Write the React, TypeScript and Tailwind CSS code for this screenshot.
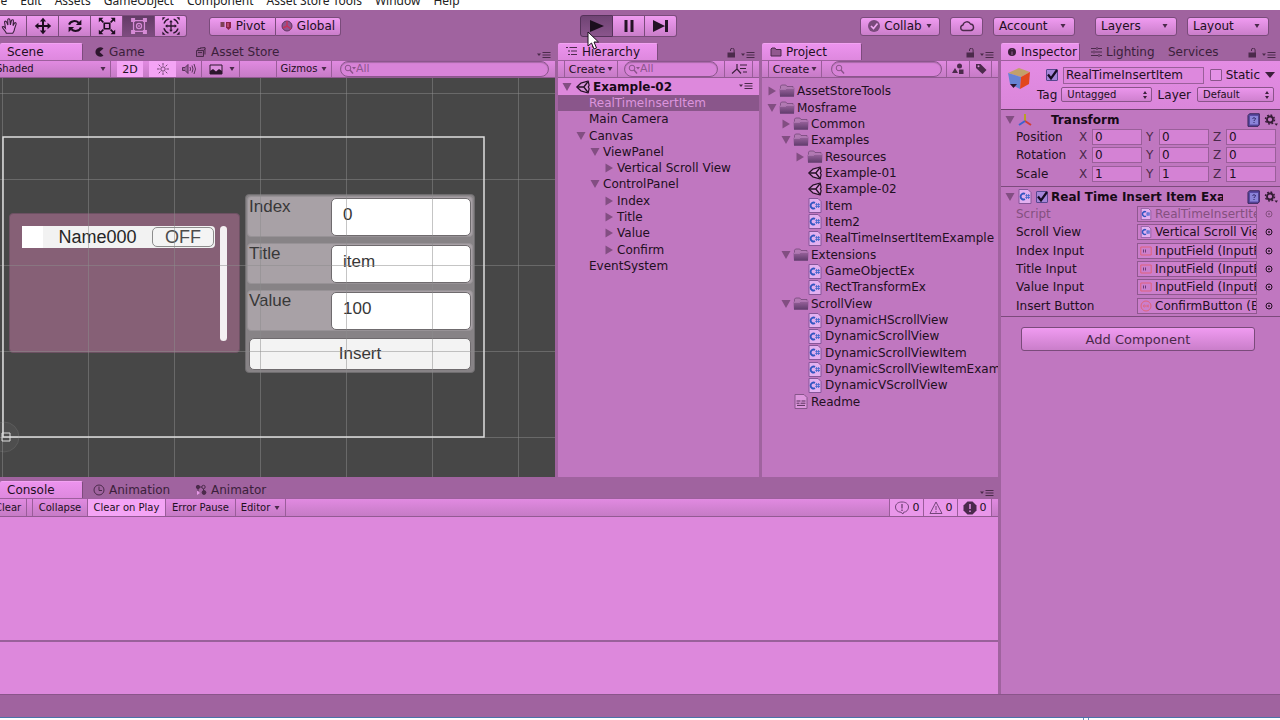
import React from 'react';
import clsx from 'clsx';

type IconProps = { className?: string };

const menus = ['File', 'Edit', 'Assets', 'GameObject', 'Component', 'Asset Store Tools', 'Window', 'Help'];

const hierarchy = [
    { name: 'RealTimeInsertItem', depth: 0, selected: true },
    { name: 'Main Camera', depth: 0 },
    { name: 'Canvas', depth: 0, open: true },
    { name: 'ViewPanel', depth: 1, open: true },
    { name: 'Vertical Scroll View', depth: 2, open: false },
    { name: 'ControlPanel', depth: 1, open: true },
    { name: 'Index', depth: 2, open: false },
    { name: 'Title', depth: 2, open: false },
    { name: 'Value', depth: 2, open: false },
    { name: 'Confirm', depth: 2, open: false },
    { name: 'EventSystem', depth: 0 },
];

const assets = [
    { name: 'AssetStoreTools', depth: 0, kind: 'folder', open: false },
    { name: 'Mosframe', depth: 0, kind: 'folder', open: true },
    { name: 'Common', depth: 1, kind: 'folder', open: false },
    { name: 'Examples', depth: 1, kind: 'folder', open: true },
    { name: 'Resources', depth: 2, kind: 'folder', open: false },
    { name: 'Example-01', depth: 2, kind: 'scene' },
    { name: 'Example-02', depth: 2, kind: 'scene' },
    { name: 'Item', depth: 2, kind: 'script' },
    { name: 'Item2', depth: 2, kind: 'script' },
    { name: 'RealTimeInsertItemExample', depth: 2, kind: 'script' },
    { name: 'Extensions', depth: 1, kind: 'folder', open: true },
    { name: 'GameObjectEx', depth: 2, kind: 'script' },
    { name: 'RectTransformEx', depth: 2, kind: 'script' },
    { name: 'ScrollView', depth: 1, kind: 'folder', open: true },
    { name: 'DynamicHScrollView', depth: 2, kind: 'script' },
    { name: 'DynamicScrollView', depth: 2, kind: 'script' },
    { name: 'DynamicScrollViewItem', depth: 2, kind: 'script' },
    { name: 'DynamicScrollViewItemExample', depth: 2, kind: 'script' },
    { name: 'DynamicVScrollView', depth: 2, kind: 'script' },
    { name: 'Readme', depth: 1, kind: 'text' },
];

const indents = ['pl-[5px]', 'pl-[19px]', 'pl-[33px]'];

const transform = [
    { name: 'Position', value: '0' },
    { name: 'Rotation', value: '0' },
    { name: 'Scale', value: '1' },
];

const fields = [
    { name: 'Script', value: 'RealTimeInsertItemExample', kind: 'script', disabled: true },
    { name: 'Scroll View', value: 'Vertical Scroll View', kind: 'script' },
    { name: 'Index Input', value: 'InputField (InputField)', kind: 'input' },
    { name: 'Title Input', value: 'InputField (InputField)', kind: 'input' },
    { name: 'Value Input', value: 'InputField (InputField)', kind: 'input' },
    { name: 'Insert Button', value: 'ConfirmButton (Button)', kind: 'button' },
];

const raised = 'border border-[#7a4b7b] bg-linear-to-b from-[#f09bf1] to-[#ca7eca]';
const strip = 'flex h-[18px] items-stretch border-y border-t-[#9d5f9d] border-b-[#935a93] bg-linear-to-b from-[#e18ae1] to-[#c67bc6]';

/* ---------- icons ---------- */

function Arrow({ open, className }: { open?: boolean; className?: string }) {
    return (
        <svg viewBox="0 0 10 10" className={clsx('size-[10px] shrink-0 fill-[#824e82]', className)}>
            <path d={open ? 'M0.5 1h9L5 9z' : 'M1.5 0.5v9L9 5z'} />
        </svg>
    );
}

function Caret({ className }: IconProps) {
    return (
        <svg viewBox="0 0 6 4" className={clsx('h-[4px] w-[6px] shrink-0 fill-[#4a294a]', className)}>
            <path d="M0.5 0h5L3 4z" />
        </svg>
    );
}

function Folder({ className }: IconProps) {
    return (
        <svg viewBox="0 0 16 14" className={clsx('h-[14px] w-4 shrink-0', className)}>
            <defs>
                <linearGradient id="folder" x1="0" y1="0" x2="0" y2="1">
                    <stop offset="0" stopColor="#9c659f" />
                    <stop offset="1" stopColor="#5f3b6b" />
                </linearGradient>
            </defs>
            <path d="M1.5 6V2.2L2.5 1h4.300L8 2.500h6V6z" fill="#b27ab3" stroke="#75497a" strokeWidth=".8" />
            <path d="M0.5 4.800h6l1-1h8l-.5 9H1z" fill="url(#folder)" />
            <path d="M1 5.200h5.800l1-1h7" fill="none" stroke="#c58bc7" strokeWidth=".7" />
        </svg>
    );
}

function UnityLogo({ className }: IconProps) {
    return (
        <svg viewBox="0 0 14 14" className={clsx('size-[14px] shrink-0', className)} fill="none" stroke="#241024" strokeLinejoin="round">
            <path d="M0.800 7 4.800 3.200 12.200 1l.9 4.400-.8 1.600.8 1.600-.9 4.400L4.800 10.800z" strokeWidth="1.200" fill="#d793d8" />
            <path d="M1.500 7h6.300M7.800 7l3.900-5M7.800 7l3.900 5" strokeWidth="1.300" />
        </svg>
    );
}

function ScriptIcon({ className }: IconProps) {
    return (
        <svg viewBox="0 0 14 15" className={clsx('shrink-0', className ?? 'h-[15px] w-[14px]')}>
            <path d="M1 .5h9l3 3v11H1z" fill="#e3b0f0" stroke="#86569a" />
            <path d="M7 4.9A3 3 0 1 0 7 10.2" fill="none" stroke="#3255c0" strokeWidth="1.9" />
            <path d="M8.6 5v5M10.6 5v5M7.3 6.6H12M7.3 8.5H12" stroke="#4769cf" strokeWidth=".9" />
        </svg>
    );
}

function TextIcon() {
    return (
        <svg viewBox="0 0 14 15" className="h-[15px] w-[14px] shrink-0">
            <path d="M1 .5h9l3 3v11H1z" fill="#dd96dd" stroke="#86568a" />
            <path d="M2.5 7h4M7.5 7h4M2.5 9.2h3M6.5 9.2h5M3 11.4h8" stroke="#542f58" />
        </svg>
    );
}

function FieldIcon({ kind }: { kind: string }) {
    if (kind === 'script') return <ScriptIcon className="h-3 w-3" />;
    if (kind === 'input') {
        return (
            <svg viewBox="0 0 12 10" className="h-[10px] w-3 shrink-0" fill="none" stroke="#e0637c">
                <path d="M.8 1h10.4v8H.8z" />
                <path d="M3.5 3.5v3M5.5 3.5v3" stroke="#6b3b78" />
            </svg>
        );
    }
    return (
        <svg viewBox="0 0 12 12" className="size-3 shrink-0" fill="none" stroke="#e0637c">
            <circle cx="6" cy="6" r="5" />
            <circle cx="4.4" cy="6" r="1" strokeWidth=".9" />
            <path d="M7 4.8v2.4M9 4.8 7.4 6 9 7.2" strokeWidth=".9" />
        </svg>
    );
}

function AssetIcon({ kind }: { kind: string }) {
    if (kind === 'folder') return <Folder />;
    if (kind === 'scene') return <UnityLogo />;
    if (kind === 'script') return <ScriptIcon />;
    return <TextIcon />;
}

function LockIcon() {
    return (
        <svg viewBox="0 0 9 10" className="h-[10px] w-[9px]">
            <path d="M.5 4.5h7.5v5H.5z" fill="#4b2a4b" />
            <path d="M3.5 3V2a1.8 1.8 0 0 1 3.6 0v3" fill="none" stroke="#4b2a4b" />
        </svg>
    );
}

function PaneMenu({ lock }: { lock?: boolean }) {
    return (
        <div className="ml-auto flex items-end gap-[5px] pr-1 pb-px">
            {lock && (
                <button aria-label="Lock pane" className="pb-px">
                    <LockIcon />
                </button>
            )}
            <button aria-label="Pane menu">
                <svg viewBox="0 0 14 8" className="h-2 w-[14px]">
                    <path d="M0 2.5h4L2 5z" fill="#4b2a4b" />
                    <path d="M5.5 1.5h8M5.5 4h8M5.5 6.5h8" stroke="#4b2a4b" />
                </svg>
            </button>
        </div>
    );
}

function BookIcon() {
    return (
        <svg viewBox="0 0 13 14" className="h-[14px] w-[13px]">
            <path d="M1 2.5 2.5.8h9.8v11L11 13.3H1z" fill="#5a4aa5" stroke="#332458" />
            <path d="M3 3h8v8.5H3z" fill="#8a83d8" />
            <path d="M5.5 5.5q1.5-1.6 3 0c.4 1.3-1.5 1-1.5 2.5M7 9v1" fill="none" stroke="#2c2264" />
        </svg>
    );
}

function GearIcon() {
    return (
        <svg viewBox="0 0 14 14" className="size-[14px]">
            <circle cx="6" cy="6.5" r="3" fill="none" stroke="#341c34" strokeWidth="1.800" />
            <circle cx="6" cy="6.5" r="4.500" fill="none" stroke="#341c34" strokeWidth="1.5" strokeDasharray="1.767 1.767" />
            <path d="M10.5 10.5H14l-1.7 2.3z" fill="#341c34" />
        </svg>
    );
}

const toolIcons: Record<string, React.ReactNode> = {
    Hand: (
        <path
            d="M7 19c-1-3-4-4.500-4.500-7 1-1.200 2.500.3 3.500 1.500L5 6.500c1-1.500 2-.8 2.400.3L8.700 10 8.500 4c.8-1.500 2-1 2.400.3l.5 5.500 1.200-5c1-1.300 2.200-.6 2.200.6l-.5 5.200 1.700-3c1.200-.8 2 .1 1.700 1.400L16 14c0 2-1 3.500-2 5z"
            fill="#e695e8"
            stroke="#3a203c"
            strokeWidth="1.2"
        />
    ),
    Move: (
        <>
            <path d="M11 4v14M4 11h14" stroke="#1d0d1f" strokeWidth="2.2" />
            <path d="M11 2l3.500 4h-7zM11 20l3.500-4h-7zM2 11l4-3.500v7zM20 11l-4-3.500v7z" fill="#1d0d1f" />
        </>
    ),
    Rotate: (
        <>
            <path d="M4.500 9.500C6 5 12 4.500 15 7.500M17.500 12.500C16 17 10 17.500 7 14.500" fill="none" stroke="#1d0d1f" strokeWidth="2.200" />
            <path d="M18 4v6h-6zM4 18v-6h6z" fill="#1d0d1f" />
        </>
    ),
    Scale: (
        <>
            <path d="M8 8h6v6H8z" fill="none" stroke="#1d0d1f" strokeWidth="1.800" />
            <path d="M4 4l3 3M18 4l-3 3M4 18l3-3M18 18l-3-3" stroke="#1d0d1f" strokeWidth="1.800" />
            <path d="M2 2h5L2 7zM20 2h-5l5 5zM2 20h5l-5-5zM20 20h-5l5-5z" fill="#1d0d1f" />
        </>
    ),
    Rect: (
        <g fill="none" stroke="#d68bd6" strokeWidth="1.400">
            <path d="M5 5h12v12H5z" />
            <path d="M3 3h3v3H3zM16 3h3v3h-3zM3 16h3v3H3zM16 16h3v3h-3z" fill="#d68bd6" />
            <circle cx="11" cy="11" r="2.800" />
            <path d="M11 10v2" />
        </g>
    ),
    Transform: (
        <>
            <path d="M11 6v10M6 11h10" stroke="#2b152d" strokeWidth="1.400" />
            <path d="M11 4.500l2 2.500H9zM11 17.500l2-2.500H9zM4.500 11 7 9v4zM17.500 11 15 9v4z" fill="#2b152d" />
            <circle cx="11" cy="11" r="8.200" fill="none" stroke="#2b152d" strokeWidth="1.500" strokeDasharray="7.500 5.380" strokeDashoffset="-2.700" />
            <path d="M1.500 1.500H5L1.500 5zM20.500 1.500H17L20.500 5zM1.500 20.500H5L1.500 17zM20.500 20.500H17l3.500-3.500z" fill="#2b152d" />
        </>
    ),
};

/* ---------- shared pieces ---------- */

function Tab({ icon, active, className, children }: { icon?: React.ReactNode; active?: boolean; className?: string; children: React.ReactNode }) {
    return (
        <button
            className={clsx(
                'flex shrink-0 items-center gap-1 rounded-t-[2px] text-[12px] leading-none',
                active ? 'border-t border-r border-t-[#f2a2f2] border-r-[#7d4b7d] bg-linear-to-b from-[#ec93ee] to-[#de88de] text-[#220f22]' : 'text-[#3b1f3b]',
                className,
            )}
        >
            {icon && (
                <svg viewBox="0 0 12 12" className="size-3 shrink-0" fill="none" stroke="#4b2a4b">
                    {icon}
                </svg>
            )}
            {children}
        </button>
    );
}

function Search({ placeholder, className, label }: { placeholder?: string; className?: string; label: string }) {
    return (
        <label className={clsx('flex min-w-0 items-center rounded-full border border-[#8b568c] bg-[#d883d8] pl-[3px] shadow-[inset_0_1px_1px_#a868a8]', className)}>
            <svg viewBox="0 0 12 10" className="h-[10px] w-3 shrink-0" fill="none" stroke="#8a528a">
                <circle cx="4" cy="4" r="2.800" />
                <path d="M6 6l3 3.500" strokeWidth="1.400" />
                {placeholder && <path d="M8 3h4l-2 2.500z" fill="#8a528a" stroke="none" />}
            </svg>
            <input aria-label={label} placeholder={placeholder} className="h-[14px] w-full min-w-0 bg-transparent pb-px text-[11px] leading-none text-[#3b1f3b] outline-none placeholder:text-[#8f568f]" />
        </label>
    );
}

function Check({ id, checked, label }: { id: string; checked?: boolean; label: string }) {
    return (
        <span className="relative flex size-3 shrink-0">
            <input
                id={id}
                type="checkbox"
                aria-label={label}
                defaultChecked={checked}
                className="peer size-3 appearance-none rounded-[1px] border border-[#8b558c] bg-[#e492e6] checked:border-[#57478f] checked:bg-[#a585d8]"
            />
            <svg viewBox="0 0 12 12" className="pointer-events-none absolute inset-0 hidden size-3 overflow-visible peer-checked:block">
                <path d="M2 5.500 5 9.500 11 1" fill="none" stroke="#160b22" strokeWidth="2.200" />
            </svg>
        </span>
    );
}

function Popup({ id, value, className }: { id: string; value: string; className: string }) {
    return (
        <span className={clsx('relative flex min-w-0', className)}>
            <select id={id} className="h-[15px] w-full appearance-none rounded-[2px] border border-[#8a548a] bg-linear-to-b from-[#eb96ec] to-[#cf80cf] pl-[5px] text-[10px] leading-none text-[#220f22]">
                <option>{value}</option>
            </select>
            <svg viewBox="0 0 4 8" className="pointer-events-none absolute top-1 right-[5px] h-2 w-1 fill-[#3b1f3b]">
                <path d="M0 3l2-3 2 3zM0 5h4L2 8z" />
            </svg>
        </span>
    );
}

/* ---------- panes ---------- */

function Toolbar() {
    return (
        <div className="flex h-8 items-center pr-[11px] text-[12px] leading-none">
            <div className="flex">
                {Object.keys(toolIcons).map((name, i) => (
                    <button
                        key={name}
                        aria-label={name}
                        className={clsx(
                            'flex h-[22px] items-center justify-center border-y border-r border-[#7a4b7b]',
                            i === 0 ? 'w-[27px] pr-[6px]' : 'w-8',
                            i === 5 && 'rounded-r-[3px]',
                            name === 'Rect' ? 'bg-linear-to-b from-[#633b66] to-[#7e4c80]' : 'bg-linear-to-b from-[#f09bf1] to-[#ca7eca]',
                        )}
                    >
                        <svg viewBox="0 0 22 22" className="size-5 shrink-0">
                            {toolIcons[name]}
                        </svg>
                    </button>
                ))}
            </div>
            <div className="ml-[22px] flex h-[19px]">
                <button className={clsx(raised, 'flex w-[67px] items-center justify-center gap-1 rounded-l-[3px]')}>
                    <svg viewBox="0 0 12 10" className="h-[10px] w-3">
                        <path d="M.5 1h4v5h-4z" fill="#7d4156" />
                        <path d="M6 1h5v5.500L8.500 9 6 6.500z" fill="#8b2448" />
                        <path d="M8 2v4" stroke="#e56c9a" />
                    </svg>
                    Pivot
                </button>
                <button className={clsx(raised, 'flex w-[65px] items-center justify-center gap-1 rounded-r-[3px] border-l-0')}>
                    <svg viewBox="0 0 12 12" className="size-3">
                        <circle cx="6" cy="6" r="5" fill="#8f5590" stroke="#5f3560" />
                        <path d="M6 1v5l4 3M6 6 2 8" stroke="#c8315a" fill="none" strokeWidth="1.400" />
                    </svg>
                    Global
                </button>
            </div>
            <div className="grow-17" />
            <div className="relative flex h-[22px]">
                <button aria-label="Play" className="flex w-[33px] items-center justify-center rounded-l-[3px] border border-[#55325a] bg-linear-to-b from-[#704474] to-[#8a558c]">
                    <svg viewBox="0 0 16 14" className="h-[14px] w-4">
                        <path d="M1 1l14 6-14 6z" fill="#1b0e1d" />
                    </svg>
                </button>
                <button aria-label="Pause" className={clsx(raised, 'flex w-8 items-center justify-center border-l-0')}>
                    <svg viewBox="0 0 12 14" className="h-[14px] w-3">
                        <path d="M1.500 1h3v12h-3zM7.500 1h3v12h-3z" fill="#241326" />
                    </svg>
                </button>
                <button aria-label="Step" className={clsx(raised, 'flex w-8 items-center justify-center rounded-r-[3px] border-l-0')}>
                    <svg viewBox="0 0 16 14" className="h-[14px] w-4">
                        <path d="M0 1l12 6-12 6zM12 1h3v12h-3z" fill="#241326" />
                    </svg>
                </button>
                <svg viewBox="0 0 14 20" className="pointer-events-none absolute top-4 left-[7px] z-10 h-5 w-[14px]">
                    <path d="M1 1v14l3.500-3 2.500 6 2.500-1-2.500-6h4.500z" fill="#fff" stroke="#1a0e1c" />
                </svg>
            </div>
            <div className="grow-13" />
            <div className="flex h-[19px] gap-[10px]">
                <button className={clsx(raised, 'flex w-[80px] items-center justify-center gap-1 rounded-[3px]')}>
                    <svg viewBox="0 0 12 12" className="size-3">
                        <circle cx="6" cy="6" r="6" fill="#7a4a7c" />
                        <path d="M3 6l2.500 2.500L9.500 3.500" fill="none" stroke="#f0a8f1" strokeWidth="1.700" />
                    </svg>
                    Collab
                    <Caret />
                </button>
                <button aria-label="Cloud" className={clsx(raised, 'flex w-[33px] items-center justify-center rounded-[3px]')}>
                    <svg viewBox="0 0 16 12" className="h-3 w-4" fill="none" stroke="#4b2a4b" strokeWidth="1.400">
                        <path d="M4 10.500a2.800 2.800 0 0 1 0-5.500 4 4 0 0 1 7.500-1 3.300 3.300 0 0 1 .5 6.500z" />
                    </svg>
                </button>
                {['Account', 'Layers', 'Layout'].map((name) => (
                    <button key={name} className={clsx(raised, 'flex w-[82px] items-center justify-between rounded-[3px] pr-2 pl-[5px]', name === 'Layers' && 'ml-[10px]')}>
                        {name}
                        <Caret />
                    </button>
                ))}
            </div>
        </div>
    );
}

function SceneView() {
    return (
        <div className="relative min-h-[399px] flex-1 overflow-hidden bg-[#474747] font-['Liberation_Sans',Arial,sans-serif] text-[17px] leading-none text-[#383838]">
            <div className="absolute top-[135px] left-[9px] h-[140px] w-[231px] rounded-[4px] border border-[#6d5163] bg-[#866076]">
                <div className="absolute top-3 left-3 flex h-[22px] w-[193px] items-center rounded-r-[4px] bg-[#f2f2f2]">
                    <div className="h-full w-[21px] bg-white" />
                    <span className="flex-1 text-center text-[18px] text-[#262626]">Name000</span>
                    <button className="mr-px h-5 w-[62px] rounded-[5px] border border-[#8c8c8c] bg-[#f4f4f4] text-[18px] text-[#4c4c4c]">OFF</button>
                </div>
                <div className="absolute top-3 right-3 h-[115px] w-[7px] rounded-full bg-[#f4f0f2]" />
            </div>
            <div className="absolute top-[116px] left-[245px] h-[179px] w-[230px] rounded-[4px] border border-[#6f6d6f] bg-[#878386]">
                {[
                    ['Index', '0', 'top-[1px]'],
                    ['Title', 'item', 'top-[48px]'],
                    ['Value', '100', 'top-[95px]'],
                ].map(([name, value, top]) => (
                    <div key={name} className={clsx('absolute left-px h-[41px] w-[226px] rounded-[4px] border border-[#979296] bg-[#a8a1a6]', top)}>
                        <label htmlFor={`scene-${name}`} className="absolute top-px left-px">
                            {name}
                        </label>
                        <input
                            id={`scene-${name}`}
                            defaultValue={value}
                            className="absolute top-px right-px h-[38px] w-[140px] rounded-[5px] border border-[#6f6b6e] bg-white pr-2 pb-1 pl-[11px] outline-none"
                        />
                    </div>
                ))}
                <button className="absolute top-[143px] left-[3px] h-8 w-[222px] rounded-[5px] border border-[#6f6b6e] bg-[#f3f3f3] pb-px">Insert</button>
            </div>
            <svg className="pointer-events-none absolute inset-0 size-full" fill="none" stroke="#8c8c8c" strokeOpacity=".5">
                <path d="M88.500 0v400M174.500 0v400M260.500 0v400M346.500 0v400M432.500 0v400M518.500 0v400M2.500 0v400" />
                <path d="M0 15.500h555M0 101.500h555M0 187.500h555M0 273.500h555M0 359.500h555" />
                <path d="M3 59h481v300H3z" stroke="#dedede" strokeOpacity="1" strokeWidth="1.500" />
                <circle cx="4" cy="359" r="15" strokeOpacity=".25" fill="#fff" fillOpacity=".04" />
                <path d="M2 355h8v8H2z" stroke="#dedede" strokeOpacity="1" />
            </svg>
        </div>
    );
}

function ScenePane() {
    return (
        <section className="flex min-w-0 flex-1 flex-col">
            <div className="flex h-[17px]">
                <Tab active className="w-[83px] pl-[7px]">Scene</Tab>
                <Tab className="w-[102px] pl-[10px]" icon={<path d="M10.500 2.500A4.800 4.800 0 1 0 10.500 9.500L6.500 6z" fill="#2d162d" stroke="none" />}>
                    Game
                </Tab>
                <Tab className="pl-[10px]" icon={<path d="M1.500 4.500h7v6h-7zM3 4V2.500h3M5 2l5-.500v7M3 6.500h4M8.500 4.500l2-2" fill="#92598f" />}>
                    Asset Store
                </Tab>
                <PaneMenu />
            </div>
            <div className={clsx(strip, 'text-[10px] leading-none text-[#220f22]')}>
                <button className="-ml-1 flex w-[115px] items-center justify-between border-r border-[#9a5d9a] pr-1">
                    Shaded
                    <Caret />
                </button>
                <button className="ml-[6px] w-[26px] bg-[#f4a4f5] text-[11px]">2D</button>
                <button aria-label="Lighting" className="ml-[6px] flex w-[27px] items-center justify-center bg-[#f4a4f5]">
                    <svg viewBox="0 0 14 14" className="size-3" fill="none" stroke="#5a335a">
                        <circle cx="7" cy="7" r="2.500" />
                        <path d="M7 0v3M7 11v3M0 7h3M11 7h3M2 2l2 2M10 10l2 2M2 12l2-2M10 4l2-2" />
                    </svg>
                </button>
                <button aria-label="Audio" className="flex w-[26px] items-center justify-center border-r border-[#9a5d9a]">
                    <svg viewBox="0 0 14 12" className="h-3 w-[14px]" fill="none" stroke="#5a335a">
                        <path d="M.5 4.500h2.500L6 1.500v9L3 7.500H.5z" fill="#9a629c" />
                        <path d="M8 4q1 2 0 4M10 2.500q2 3.500 0 7M12 1q3 5 0 10" />
                    </svg>
                </button>
                <button aria-label="Effects" className="flex w-[38px] items-center justify-between border-r border-[#9a5d9a] pr-1 pl-[7px]">
                    <svg viewBox="0 0 14 11" className="h-[11px] w-[14px]">
                        <path d="M1 1h12v9H1z" fill="#dd90de" stroke="#2c162d" />
                        <path d="M1 10V7l3-2 3 2.500L10 5l3 2v3z" fill="#2c162d" />
                    </svg>
                    <Caret />
                </button>
                <button className="ml-9 flex w-[56px] items-center justify-center gap-1 border-x border-[#9a5d9a]">
                    Gizmos
                    <Caret />
                </button>
                <Search label="Search scene" placeholder="All" className="mr-[6px] ml-2 flex-1" />
            </div>
            <SceneView />
        </section>
    );
}

function CreateButton() {
    return (
        <button className="ml-[6px] flex w-[54px] shrink-0 items-center justify-center gap-[2px] border-x border-[#9a5d9a] text-[11px] leading-none text-[#220f22]">
            Create
            <Caret />
        </button>
    );
}

function HierarchyPane() {
    return (
        <section className="flex w-[201px] shrink-0 flex-col bg-[#c077c0]">
            <div className="flex h-[17px] bg-[#a0639f]">
                <Tab active className="w-[100px] pl-2" icon={<path d="M0 1.500h2M3.500 1.500H11M2 5h2M5 5h6M2 8.500h2M5 8.500h6" />}>
                    Hierarchy
                </Tab>
                <PaneMenu lock />
            </div>
            <div className={strip}>
                <CreateButton />
                <Search label="Search hierarchy" placeholder="All" className="mr-[6px] ml-[6px] flex-1" />
                <button aria-label="Sort" className="mr-[6px] flex w-[29px] items-center justify-center border-x border-[#9a5d9a]">
                    <svg viewBox="0 0 16 12" className="h-3 w-4" fill="none" stroke="#3b1f3b" strokeWidth="1.200">
                        <path d="M6 1v5L1 10.500M6 6l4 4.500M9 2h7M9 5.500h6M12 9h4" />
                    </svg>
                </button>
            </div>
            <div className="flex h-[17px] items-center bg-[#dd88dc] pr-[2px] pl-1 text-[12px] leading-none font-bold text-[#170a17]">
                <Arrow open />
                <UnityLogo className="mr-[3px] ml-1" />
                Example-02
                <PaneMenu />
            </div>
            <ul className="grid h-[179px] auto-rows-fr text-[12px] leading-none text-[#220f22]">
                {hierarchy.map((item) => (
                    <li
                        key={item.name}
                        className={clsx('flex items-center gap-[3px]', ['pl-[18px]', 'pl-[32px]', 'pl-[46px]'][item.depth], item.selected && 'bg-[#8a568b] text-[#dc94dd]')}
                    >
                        {item.open === undefined ? <span className="w-[10px]" /> : <Arrow open={item.open} />}
                        <span className="whitespace-nowrap">{item.name}</span>
                    </li>
                ))}
            </ul>
        </section>
    );
}

function ProjectPane() {
    return (
        <section className="flex w-[236px] shrink-0 flex-col bg-[#c077c0]">
            <div className="flex h-[17px] bg-[#a0639f]">
                <Tab active className="w-[100px] pl-2" icon={<path d="M1 10V3l1-1h3l1 1.500h5V10z" fill="#92598f" />}>
                    Project
                </Tab>
                <PaneMenu lock />
            </div>
            <div className={strip}>
                <CreateButton />
                <Search label="Search project" className="mr-1 ml-[9px] flex-1" />
                <button aria-label="Search by type" className="flex w-[23px] items-center justify-center border-l border-[#9a5d9a]">
                    <svg viewBox="0 0 12 12" className="size-3 fill-[#4b2a4b]">
                        <path d="M0 10l3-5 3 5z" />
                        <circle cx="7.500" cy="3" r="2.500" />
                        <path d="M7 6.500h4.500V11H7z" />
                    </svg>
                </button>
                <button aria-label="Search by label" className="mr-[6px] flex w-[23px] items-center justify-center border-x border-[#9a5d9a]">
                    <svg viewBox="0 0 12 12" className="size-3">
                        <path d="M1 1h4.500l6 6L7.500 11 1 5z" fill="#4b2a4b" />
                        <circle cx="3.500" cy="3.300" r="1" fill="#dd90de" />
                    </svg>
                </button>
            </div>
            <ul className="mt-[5px] grid h-[327px] auto-rows-fr overflow-hidden text-[12px] leading-none text-[#220f22]">
                {assets.map((item) => (
                    <li key={item.name} className={clsx('flex items-center', indents[item.depth])}>
                        {item.open === undefined ? <span className="w-[10px] shrink-0" /> : <Arrow open={item.open} />}
                        <span className="ml-px flex w-[18px] shrink-0 justify-center">
                            <AssetIcon kind={item.kind} />
                        </span>
                        <span className="ml-px whitespace-nowrap">{item.name}</span>
                    </li>
                ))}
            </ul>
        </section>
    );
}

function ConsolePane() {
    const cell = 'flex items-center border-r border-[#9a5d9a]';
    return (
        <section className="flex flex-1 flex-col">
            <div className="flex h-[17px]">
                <Tab active className="w-[83px] pl-[7px]">Console</Tab>
                <Tab className="w-[102px] pl-[10px]" icon={<><circle cx="6" cy="6" r="5" /><path d="M6 2.500V6.500h3" /></>}>
                    Animation
                </Tab>
                <Tab
                    className="pl-[10px]"
                    icon={
                        <>
                            <circle cx="3" cy="3" r="1.700" fill="#4b2a4b" />
                            <circle cx="8.500" cy="3" r="1.700" />
                            <circle cx="9" cy="8.500" r="1.900" fill="#4b2a4b" />
                            <path d="M3 5v2M5 3h2M8.500 5v2" />
                            <path d="M2 6.500v4.500l3-2z" fill="#e79ae8" stroke="none" />
                        </>
                    }
                >
                    Animator
                </Tab>
                <PaneMenu />
            </div>
            <div className={clsx(strip, 'h-[19px] border-b-[#6c416c] text-[10px] leading-none text-[#220f22]')}>
                <button className={clsx(cell, '-ml-2 w-[35px] pl-[3px]')}>Clear</button>
                <button className={clsx(cell, 'ml-[5px] w-[56px] justify-center border-l')}>Collapse</button>
                <button className={clsx(cell, 'w-[78px] justify-center bg-[#f4a4f5]')}>Clear on Play</button>
                <button className={clsx(cell, 'w-[70px] justify-center')}>Error Pause</button>
                <button className={clsx(cell, 'w-[50px] justify-center gap-1')}>
                    Editor
                    <Caret />
                </button>
                <div className="mr-[6px] ml-auto flex border-l border-[#9a5d9a] bg-[#e997ea] text-[11px]">
                    <button aria-label="Messages" className={clsx(cell, 'w-[34px] justify-center gap-[3px]')}>
                        <svg viewBox="0 0 16 14" className="h-[14px] w-4" fill="none" stroke="#74467a">
                            <path d="M8 1c4 0 6.500 2 6.500 5s-2 5-5 5.300L9 13l-2-1.700C3.500 11 1.500 9 1.500 6S4 1 8 1z" />
                            <path d="M8 3v4.500M8 8.500V10" strokeWidth="1.400" />
                        </svg>
                        0
                    </button>
                    <button aria-label="Warnings" className={clsx(cell, 'w-[34px] justify-center gap-[3px]')}>
                        <svg viewBox="0 0 14 14" className="size-[14px]" fill="none" stroke="#74467a">
                            <path d="M7 1l6 11.500H1zM7 5v4M7 10v1.500" />
                        </svg>
                        0
                    </button>
                    <button aria-label="Errors" className={clsx(cell, 'w-[34px] justify-center gap-[3px]')}>
                        <svg viewBox="0 0 14 14" className="size-[14px]">
                            <path d="M4.500.5h5l4 4v5l-4 4h-5l-4-4v-5z" fill="#4a294c" />
                            <path d="M7 3v5M7 9.500V11" stroke="#e492e6" strokeWidth="1.500" />
                        </svg>
                        0
                    </button>
                </div>
            </div>
            <div className="min-h-[123px] flex-[123] bg-[#dd88dc]" />
            <div className="min-h-[54px] flex-[54] border-t-2 border-[#99609a] bg-[#dd88dc]" />
        </section>
    );
}

function ComponentTitle({ children }: { children: React.ReactNode }) {
    return (
        <div className="flex h-[17px] items-center pr-[2px] pl-1 text-[12px] leading-none font-bold text-[#170a17]">
            <Arrow open className="mr-[3px]" />
            {children}
            <div className="ml-auto flex items-center gap-1 pl-6">
                <button aria-label="Open reference">
                    <BookIcon />
                </button>
                <button aria-label="Component settings">
                    <GearIcon />
                </button>
            </div>
        </div>
    );
}

function InspectorPane() {
    const field = 'border border-[#9a5f9a] bg-[#d482d4] text-[#220f22]';
    return (
        <aside className="flex w-[279px] shrink-0 flex-col bg-[#c077c0] text-[12px] leading-none text-[#220f22]">
            <div className="flex h-[17px] bg-[#a0639f]">
                <Tab active className="w-[79px] pl-1" icon={<><circle cx="7" cy="6" r="4" fill="#3b1f3b" stroke="none" /><path d="M7 3v1M7 5.500V9" stroke="#9a629a" /></>}>
                    Inspector
                </Tab>
                <Tab className="w-[80px] pl-[10px]" icon={<path d="M1 2.500h5M8 2.500h4M7 1v3M1 6h2M5 6h7M4 4.500v3M1 9.500h7M10 9.500h2M9 8v3" />}>
                    Lighting
                </Tab>
                <Tab className="pl-2">Services</Tab>
                <PaneMenu lock />
            </div>
            <div className="flex h-[50px] border-t border-b border-t-[#9d5f9d] border-b-[#6c416c] bg-linear-to-b from-[#e48ce4] to-[#da86da] pl-[6px]">
                <svg viewBox="0 0 24 24" className="mt-[6px] size-6 shrink-0">
                    <path d="M1 6 12 1l11 4-9 5z" fill="#c3a06a" />
                    <path d="M1 6l13 4-1 12L3 17z" fill="#6683d4" />
                    <path d="M14 10l9-5-1 12-9 5z" fill="#e2471c" />
                    <path d="M3 17h7l-3.500 4z" fill="#2a1530" />
                </svg>
                <div className="flex min-w-0 flex-1 flex-col pt-[5px]">
                    <div className="flex h-[18px] items-center pr-[5px] pl-[15px]">
                        <Check id="object-active" label="Active" checked />
                        <input aria-label="Object name" defaultValue="RealTimeInsertItem" className={clsx(field, 'mr-[6px] ml-[5px] h-[17px] min-w-0 flex-1 bg-[#dd88dd] pl-[2px]')} />
                        <Check id="object-static" label="Static" />
                        <label htmlFor="object-static" className="ml-1">
                            Static
                        </label>
                        <button aria-label="Static flags" className="ml-[5px]">
                            <svg viewBox="0 0 10 6" className="h-[6px] w-[10px] fill-[#3b1f3b]">
                                <path d="M0 0h10L5 6z" />
                            </svg>
                        </button>
                    </div>
                    <div className="mt-[3px] flex items-center pr-[6px] pl-[6px]">
                        <label htmlFor="tag">Tag</label>
                        <Popup id="tag" value="Untagged" className="ml-1 flex-[88]" />
                        <label htmlFor="layer" className="ml-[6px]">
                            Layer
                        </label>
                        <Popup id="layer" value="Default" className="ml-[6px] flex-[75]" />
                    </div>
                </div>
            </div>

            <div className="border-b border-[#7c4b7c] pt-px pb-[3px]">
                <ComponentTitle>
                    <svg viewBox="0 0 14 14" className="mr-[19px] size-[14px]" fill="none" strokeWidth="2">
                        <path d="M7 8V1" stroke="#b8a125" />
                        <path d="M7 8l6 4" stroke="#d23d34" />
                        <path d="M7 8l-6 4" stroke="#3d63cf" />
                    </svg>
                    Transform
                </ComponentTitle>
                <div className="grid h-[55px] auto-rows-fr grid-cols-1 pl-[15px]">
                    {transform.map((row) => (
                        <div key={row.name} className="flex min-w-0 items-center">
                            <span className="w-[63px]">{row.name}</span>
                            {['X', 'Y', 'Z'].map((axis) => (
                                <label key={axis} className="flex min-w-0 flex-1 items-center text-[#4a294a]">
                                    <span className="w-[13px] shrink-0">{axis}</span>
                                    <input aria-label={`${row.name} ${axis}`} defaultValue={row.value} className={clsx(field, 'mr-1 h-4 w-full min-w-0 pl-[2px]')} />
                                </label>
                            ))}
                        </div>
                    ))}
                </div>
            </div>

            <div className="border-b border-[#7c4b7c] pt-px pb-px">
                <ComponentTitle>
                    <ScriptIcon className="mr-1 h-[15px] w-[14px]" />
                    <Check id="component-enabled" label="Enabled" checked />
                    <span className="ml-[3px] min-w-0 overflow-hidden whitespace-nowrap">Real Time Insert Item Example</span>
                </ComponentTitle>
                <div className="grid h-[110px] auto-rows-fr grid-cols-1 pr-[7px] pl-[15px]">
                    {fields.map((row) => (
                        <div key={row.name} className={clsx('flex min-w-0 items-center', row.disabled && 'text-[#84507f]')}>
                            <span className="w-[121px] shrink-0">{row.name}</span>
                            <div className={clsx('flex h-4 min-w-0 flex-1 items-center gap-[3px] overflow-hidden border border-[#8f588f] pl-[2px]', row.disabled ? 'bg-[#c47bc5]' : 'bg-[#cc7fcc]')}>
                                <FieldIcon kind={row.kind} />
                                <span className="whitespace-nowrap">{row.value}</span>
                            </div>
                            <button aria-label={`Pick ${row.name}`} className="ml-2 shrink-0">
                                <svg viewBox="0 0 8 8" className="size-2" fill="none" stroke="currentColor">
                                    <circle cx="4" cy="4" r="3" />
                                    <circle cx="4" cy="4" r=".6" />
                                </svg>
                            </button>
                        </div>
                    ))}
                </div>
            </div>

            <button className={clsx(raised, 'mt-[10px] mr-[25px] ml-5 h-6 rounded-[3px] text-[13px] text-[#4a294a]')}>Add Component</button>
        </aside>
    );
}

export default function App() {
    return (
        <div className="flex min-h-screen flex-col overflow-hidden bg-[#a0639f] font-['DejaVu_Sans',Verdana,sans-serif] text-[#220f22]">
            <nav className="flex h-[10px] items-end gap-[13px] overflow-hidden bg-white pb-[2px] font-['Noto_Sans',sans-serif] text-[12px] leading-none text-[#222]">
                {menus.map((name, i) => (
                    <button key={name} className={clsx('h-[14px] shrink-0', i === 0 && '-ml-3')}>
                        {name}
                    </button>
                ))}
            </nav>
            <Toolbar />
            <div className="mt-px flex flex-1 gap-[3px]">
                <div className="flex min-w-0 flex-1 flex-col gap-1">
                    <div className="flex h-[434px] gap-[3px]">
                        <ScenePane />
                        <HierarchyPane />
                        <ProjectPane />
                    </div>
                    <ConsolePane />
                </div>
                <InspectorPane />
            </div>
            <footer className="flex h-[27px] flex-col border-t border-[#8a558a]">
                <div className="flex-1" />
                <div className="flex h-1 justify-end border-t border-[#4a73a8] bg-white">
                    <span className="mr-[191px] w-[6px] border-x border-[#6d8fc0]" />
                </div>
            </footer>
        </div>
    );
}
